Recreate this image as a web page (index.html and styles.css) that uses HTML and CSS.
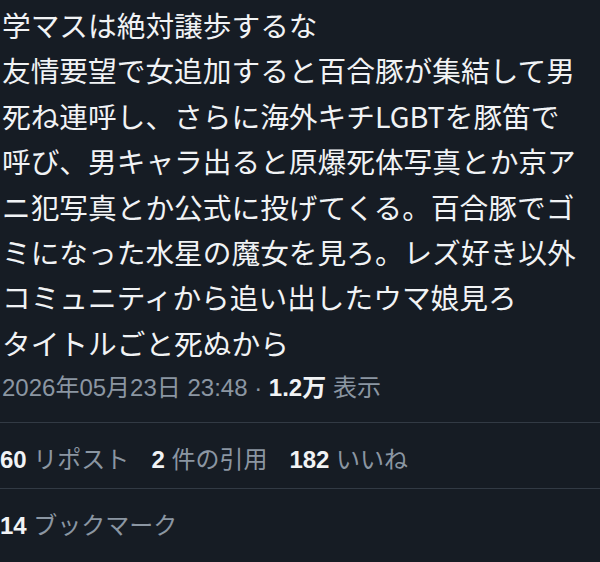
FILE: index.html
```html
<!DOCTYPE html>
<html lang="ja">
<head>
  <meta charset="UTF-8" />
  <title>post</title>
  <link rel="stylesheet" href="styles.css">
</head>
<body>

  <div class="post-text">
    学マスは絶対譲歩するな<br>
    友情要望で女追加すると百合豚が集結して男<br>
    死ね連呼し、さらに海外キチLGBTを豚笛で<br>
    呼び、男キャラ出ると原爆死体写真とか京ア<br>
    ニ犯写真とか公式に投げてくる。百合豚でゴ<br>
    ミになった水星の魔女を見ろ。レズ好き以外<br>
    コミュニティから追い出したウマ娘見ろ<br>
    タイトルごと死ぬから
  </div>

  <div class="meta">
    2026年05月23日 23:48 · <b>1.2万</b> 表示
  </div>

  <div class="stats">
    <span class="stat"><b>60</b> リポスト</span>
    <span class="stat"><b>2</b> 件の引用</span>
    <span class="stat"><b>182</b> いいね</span>
  </div>

  <div class="stats">
    <span class="stat"><b>14</b> ブックマーク</span>
  </div>

</body>
</html>
```

FILE: styles.css
```css
:root {
  --bg-color: #161c24;
  --text-color: #f1f3f5;
  --muted: #8b96a2;
  --line: #323a44;
}

body {
  margin: 0;
  background-color: var(--bg-color);
  color: var(--text-color);
  font-family: "Liberation Sans", "Noto Sans CJK JP", sans-serif;
  height: 562px;
  overflow: hidden;
}

.post-text {
  font-family: "Noto Sans CJK JP", sans-serif;
  font-size: 28.7px;
  line-height: 45.4px;
  padding: 2px 0 0 2px;
}

.meta {
  color: var(--muted);
  font-size: 24px;
  line-height: 46px;
  padding: 0 0 11px 2px;
}

.meta b {
  color: var(--text-color);
}

.stats {
  display: flex;
  gap: 22px;
  border-top: 1px solid var(--line);
  height: 66px;
  align-items: center;
  padding: 4px 0 0 0;
  box-sizing: border-box;
  font-size: 24px;
  color: var(--muted);
}

.stats b {
  color: var(--text-color);
}
```
